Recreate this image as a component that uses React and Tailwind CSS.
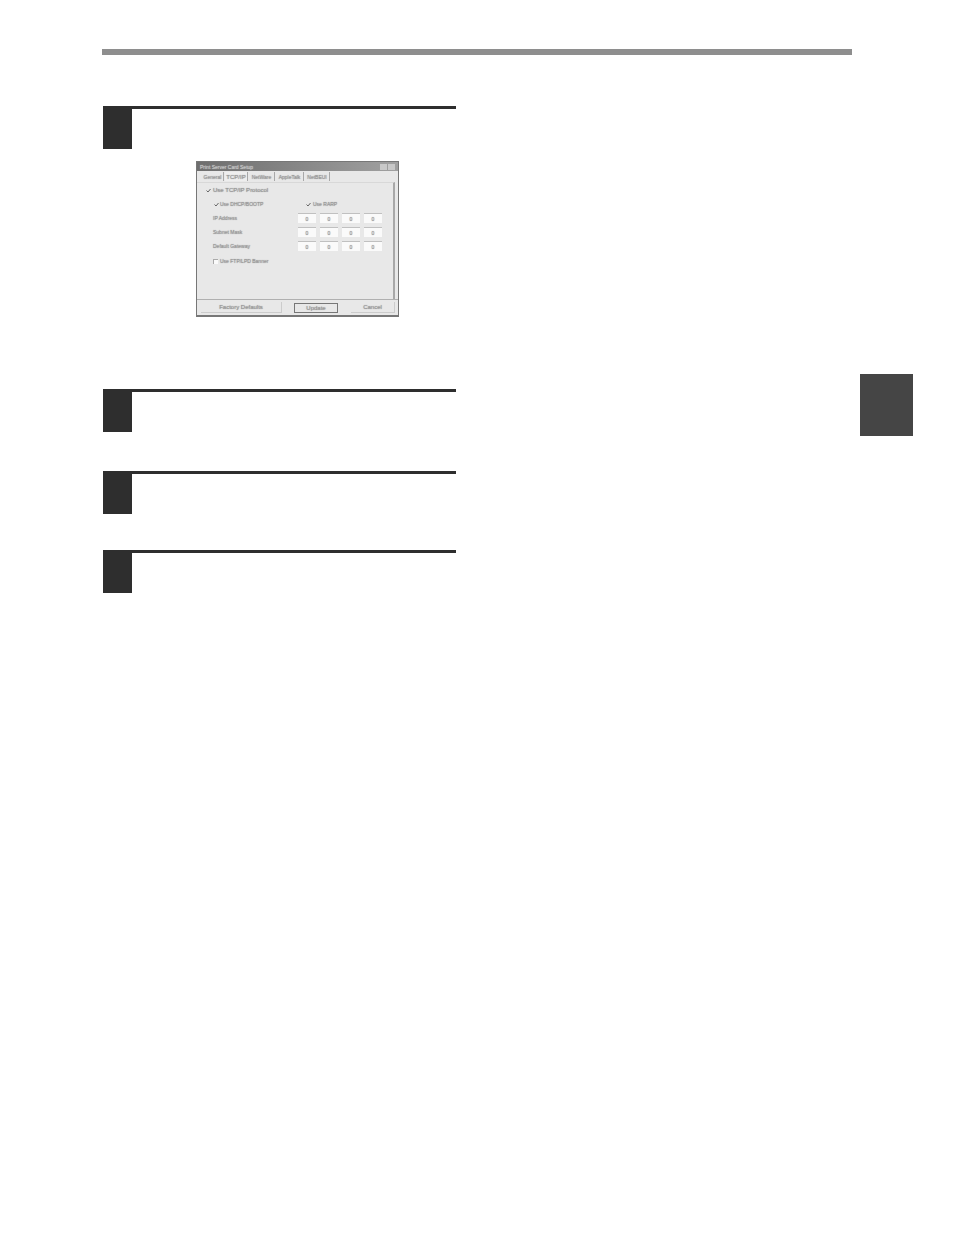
const tabs = [
  { label: 'General', w: 'w-[22px]' },
  { label: 'TCP/IP', w: 'w-[23px]', active: true },
  { label: 'NetWare', w: 'w-[26px]' },
  { label: 'AppleTalk', w: 'w-[28px]' },
  { label: 'NetBEUI', w: 'w-[25px]' },
];

const fieldRows = ['IP Address', 'Subnet Mask', 'Default Gateway'];

const Step = ({ className = '' }) => (
  <div className={`flex h-[43px] w-[353px] ml-px ${className}`}>
    <div className="w-[29px] bg-[#2e2e2e]" />
    <div className="flex-1 border-t-[3px] border-[#2e2e2e]" />
  </div>
);

const Check = () => (
  <svg width="5" height="5" viewBox="0 0 5 5" className="shrink-0">
    <path d="M0.5 2.5 L2 4 L4.5 1" fill="none" stroke="#666" strokeWidth="1" />
  </svg>
);

const Dialog = () => (
  <div className="ml-[94px] mt-[12px] flex h-[156px] w-[203px] flex-col border border-b-2 border-[#777777] bg-[#e8e8e8] font-['Liberation_Sans',sans-serif] text-[6px] leading-[8px] text-[#999999] [text-shadow:0_0_1px_#808080]">
    {/* Title bar */}
    <div className="flex h-[9px] items-center justify-between bg-gradient-to-r from-[#6e6e6e] to-[#a0a0a0] px-[3px] text-[5px] text-[#c8c8c8] [text-shadow:0_0_1px_#d0d0d0]">
      <span>Print Server Card Setup</span>
      <div className="flex gap-px">
        <span className="h-[6px] w-[7px] bg-[#c8c8c8]" />
        <span className="h-[6px] w-[7px] bg-[#c8c8c8]" />
      </div>
    </div>

    {/* Tabs */}
    <div className="mt-px flex h-[9px] gap-px pl-[5px] text-[5px]">
      {tabs.map((tab) => (
        <div
          key={tab.label}
          className={`${tab.w} flex items-center justify-center border-r border-[#a8a8a8] ${tab.active ? 'bg-[#eeeeee] text-[6px]' : ''}`}
        >
          {tab.label}
        </div>
      ))}
    </div>

    {/* Panel */}
    <div className="mr-[3px] mt-px flex flex-1 flex-col border-r-2 border-t border-r-[#a8a8a8] border-t-[#d8d8d8] pl-[9px] pt-[3px]">
      <div className="flex items-center gap-[2px]">
        <Check />
        <span>Use TCP/IP Protocol</span>
      </div>

      <div className="ml-[8px] mt-[6px] flex">
        <div className="flex w-[92px] items-center gap-[1px]">
          <Check />
          <span className="text-[5px]">Use DHCP/BOOTP</span>
        </div>
        <div className="flex items-center gap-[2px]">
          <Check />
          <span className="text-[5px]">Use RARP</span>
        </div>
      </div>

      <div className="ml-[7px] mt-[5px] flex flex-col gap-[4px]">
        {fieldRows.map((label) => (
          <div key={label} className="flex items-center">
            <span className="w-[85px] text-[5px]">{label}</span>
            <div className="flex gap-[4px]">
              {[0, 1, 2, 3].map((i) => (
                <div key={i} className="flex h-[10px] w-[18px] items-center justify-center border-t border-[#c0c0c0] bg-[#fafafa] text-[5px]">
                  0
                </div>
              ))}
            </div>
          </div>
        ))}
      </div>

      <div className="ml-[7px] mt-[6px] flex items-center gap-[2px]">
        <div className="h-[5px] w-[5px] border-l border-t border-[#aaaaaa] bg-[#fafafa]" />
        <span className="text-[5px]">Use FTP/LPD Banner</span>
      </div>
    </div>

    {/* Buttons */}
    <div className="flex h-[16px] items-center border-t border-[#b0b0b0] pl-[4px] text-[6px]">
      <div className="flex h-[11px] w-[81px] items-center justify-center border-b border-r border-[#cccccc]">Factory Defaults</div>
      <div className="ml-[12px] flex h-[10px] w-[44px] items-center justify-center border border-[#777777]">Update</div>
      <div className="ml-[13px] flex h-[11px] w-[44px] items-center justify-center border-b border-r border-[#cccccc]">Cancel</div>
    </div>
  </div>
);

export default function App() {
  return (
    <div className="flex min-h-[1235px] bg-white pl-[102px] pt-[49px]">
      <main className="w-[750px]">
        <div className="h-[6px] bg-[#8e8e8e]" />
        <div className="mt-[51px]">
          <Step />
          <Dialog />
          <Step className="mt-[72px]" />
          <Step className="mt-[39px]" />
          <Step className="mt-[36px]" />
        </div>
      </main>
      {/* Chapter tab */}
      <div className="ml-[8px] mt-[325px] h-[62px] w-[53px] bg-[#454545]" />
    </div>
  );
}
